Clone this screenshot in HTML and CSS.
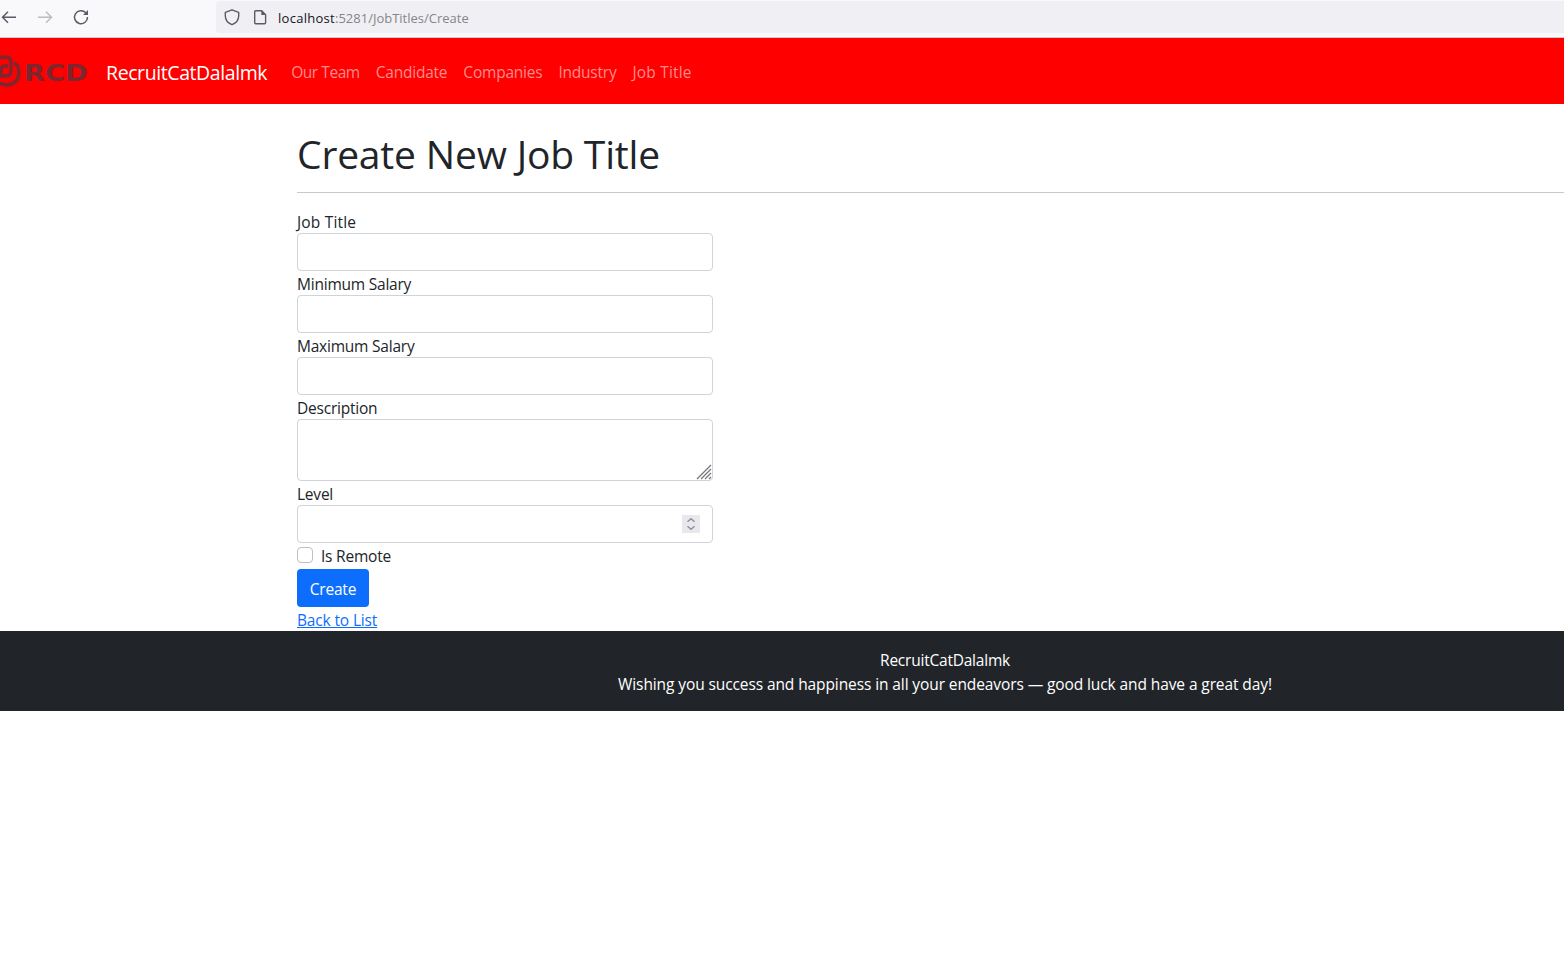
FILE: index.html
```html
<!DOCTYPE html>
<html lang="en">
<head>
<meta charset="utf-8">
<title>Create - RecruitCatDalalmk</title>
<link rel="stylesheet" href="styles.css">
</head>
<body>
<div class="toolbar">
  <svg class="tools" width="100" height="34" viewBox="0 0 100 34" fill="none" stroke="#5b5b66" stroke-width="1.5">
    <path d="M16 17.300H3M8 11.800L2.500 17.300l5.500 5.500"/>
    <path stroke="#bcbcc2" d="M38 17.300h13M46 11.800L51.500 17.300l-5.500 5.500"/>
    <path d="M85.800 12.800A6.500 6.500 0 1 0 87.500 17"/>
    <path d="M88 10v5h-5z" fill="#5b5b66" stroke="none"/>
  </svg>
  <div class="address">
    <svg width="56" height="32" viewBox="0 0 56 32" fill="none" stroke="#5b5b66" stroke-width="1.400" stroke-linejoin="round">
      <path d="M16 8.800l6.700 2.500v3.500c0 4-2.500 7.300-6.700 8.900c-4.200-1.600-6.700-4.900-6.700-8.900v-3.500z"/>
      <path d="M39.700 9.700h6l3.900 4v8q0 1-1 1h-8.900q-1 0-1-1v-11q0-1 1-1z"/>
      <path d="M45.300 9.300v4.700h4.700z" fill="#5b5b66" stroke="none"/>
    </svg>
    <span class="url"><span class="host">localhost</span>:5281/JobTitles/Create</span>
  </div>
</div>
<div class="page">
  <nav class="navbar">
    <span class="logo">
      <svg width="22" height="36" viewBox="0 0 22 36" fill="none" stroke="#7b2730" stroke-width="3.400">
        <path d="M0 4.200H6q5 0 5 5V18q0 5-5 5H1V17q0-4 4-4H8"/>
        <path d="M14 9.500Q19 12.500 19 19Q19 31 7 32Q3 32 0 30"/>
      </svg>
      <b class="logo-text">RCD</b>
    </span>
    <a class="brand">RecruitCatDalalmk</a>
    <a class="link team">Our Team</a>
    <a class="link">Candidate</a>
    <a class="link">Companies</a>
    <a class="link">Industry</a>
    <a class="link job">Job Title</a>
  </nav>
  <main class="container">
    <h1>Create New Job Title</h1>
    <hr>
    <form class="form">
      <label class="job">Job Title</label>
      <div class="control"></div>
      <label>Minimum Salary</label>
      <div class="control"></div>
      <label>Maximum Salary</label>
      <div class="control"></div>
      <label>Description</label>
      <div class="control area">
        <svg width="16" height="16" viewBox="0 0 16 16" stroke="#77777b" stroke-width="1.300"><path d="M1 15L15 1M5 15L15 5M9 15l6-6M13 15l2-2"/></svg>
      </div>
      <label>Level</label>
      <div class="control number">
        <svg width="18" height="18" viewBox="0 0 18 18" fill="none" stroke="#8f8f9d" stroke-width="1.500"><path fill="#e9e9ed" stroke="none" d="M0 0h18v18H0z"/><path d="M5.500 6.700L9 3.700l3.500 3M5.500 11.300l3.500 3l3.500-3"/></svg>
      </div>
      <div class="check"><i class="box"></i>Is Remote</div>
      <button class="btn" type="button">Create</button>
    </form>
    <a class="back">Back to List</a>
  </main>
  <footer class="footer">
    <div>RecruitCatDalalmk</div>
    <div class="wish">Wishing you success and happiness in all your endeavors — good luck and have a great day!</div>
  </footer>
</div>
</body>
</html>
```
FILE: styles.css
```css
* { box-sizing: border-box; }
body {
  margin: 0;
  width: 1564px;
  height: 979px;
  overflow: hidden;
  background: #fff;
  color: #212529;
  font: 15.5px/24px "Open Sans", "Noto Sans", sans-serif;
  letter-spacing: -.22px;
}
.toolbar {
  display: flex;
  height: 38px;
  padding-top: 1px;
  background: #f9f9fb;
  border-bottom: 1px solid #ccccd0;
}
.tools { flex: none; width: 100px; margin: -1px 116px 0 0; }
.address {
  display: flex;
  flex: 1;
  height: 32px;
  background: #f0f0f4;
  border-radius: 4px 0 0 4px;
}
.url { margin-left: 6px; font-size: 13px; line-height: 34px; color: #85858b; letter-spacing: 0; }
.host { color: #15141a; letter-spacing: .28px; }
.page { width: 1890px; }
.navbar {
  display: flex;
  align-items: center;
  height: 66px;
  background: #f00;
}
.logo { display: flex; align-items: center; width: 106px; height: 36px; color: #7b2730; }
.logo-text {
  margin: 3px 0 0 2px;
  font: bold 23.5px/36px "DejaVu Sans", sans-serif;
  letter-spacing: 0;
  transform-origin: 0 50%;
  transform: scaleX(1.160);
}
.brand { margin-right: 16px; padding-top: 3px; font-size: 19.5px; line-height: 30px; letter-spacing: -.41px; color: #fff; }
.link { padding: 2px 8px 0; color: #ff8c8c; }
.team { letter-spacing: -.45px; }
.job { letter-spacing: .18px; }
.container { width: 1320px; margin: 0 auto; padding: 24px 12px 0; }
h1 { height: 48px; margin: 0; padding-top: 2px; font-size: 39px; font-weight: 400; line-height: 48px; letter-spacing: -.18px; }
hr { margin: 16px 0; border: 0; border-top: 1px solid #c8c9ca; }
.form { width: 416px; }
label { display: block; height: 24px; padding-top: 1px; }
.control { height: 38px; border: 1px solid #ced4da; border-radius: 4px; }
.area { display: flex; justify-content: flex-end; align-items: flex-end; height: 62px; }
.number { display: flex; justify-content: flex-end; align-items: center; padding-right: 12px; }
.check { display: flex; gap: 8px; height: 26px; padding-top: 1px; }
.box { width: 16px; height: 16px; margin-top: 3px; border: 1px solid #bfbfbf; border-radius: 4px; }
.btn { display: block; width: 72px; height: 38px; padding: 2px 0 0; border: 0; border-radius: 4px; background: #0d6efd; color: #fff; font: inherit; letter-spacing: inherit; }
.back { display: block; height: 24px; padding-top: 1px; color: #0d6efd; text-decoration: underline; letter-spacing: -.15px; }
.footer { height: 80px; padding-top: 17px; background: #212529; color: #fff; text-align: center; }
.wish { letter-spacing: -.1px; }
```
